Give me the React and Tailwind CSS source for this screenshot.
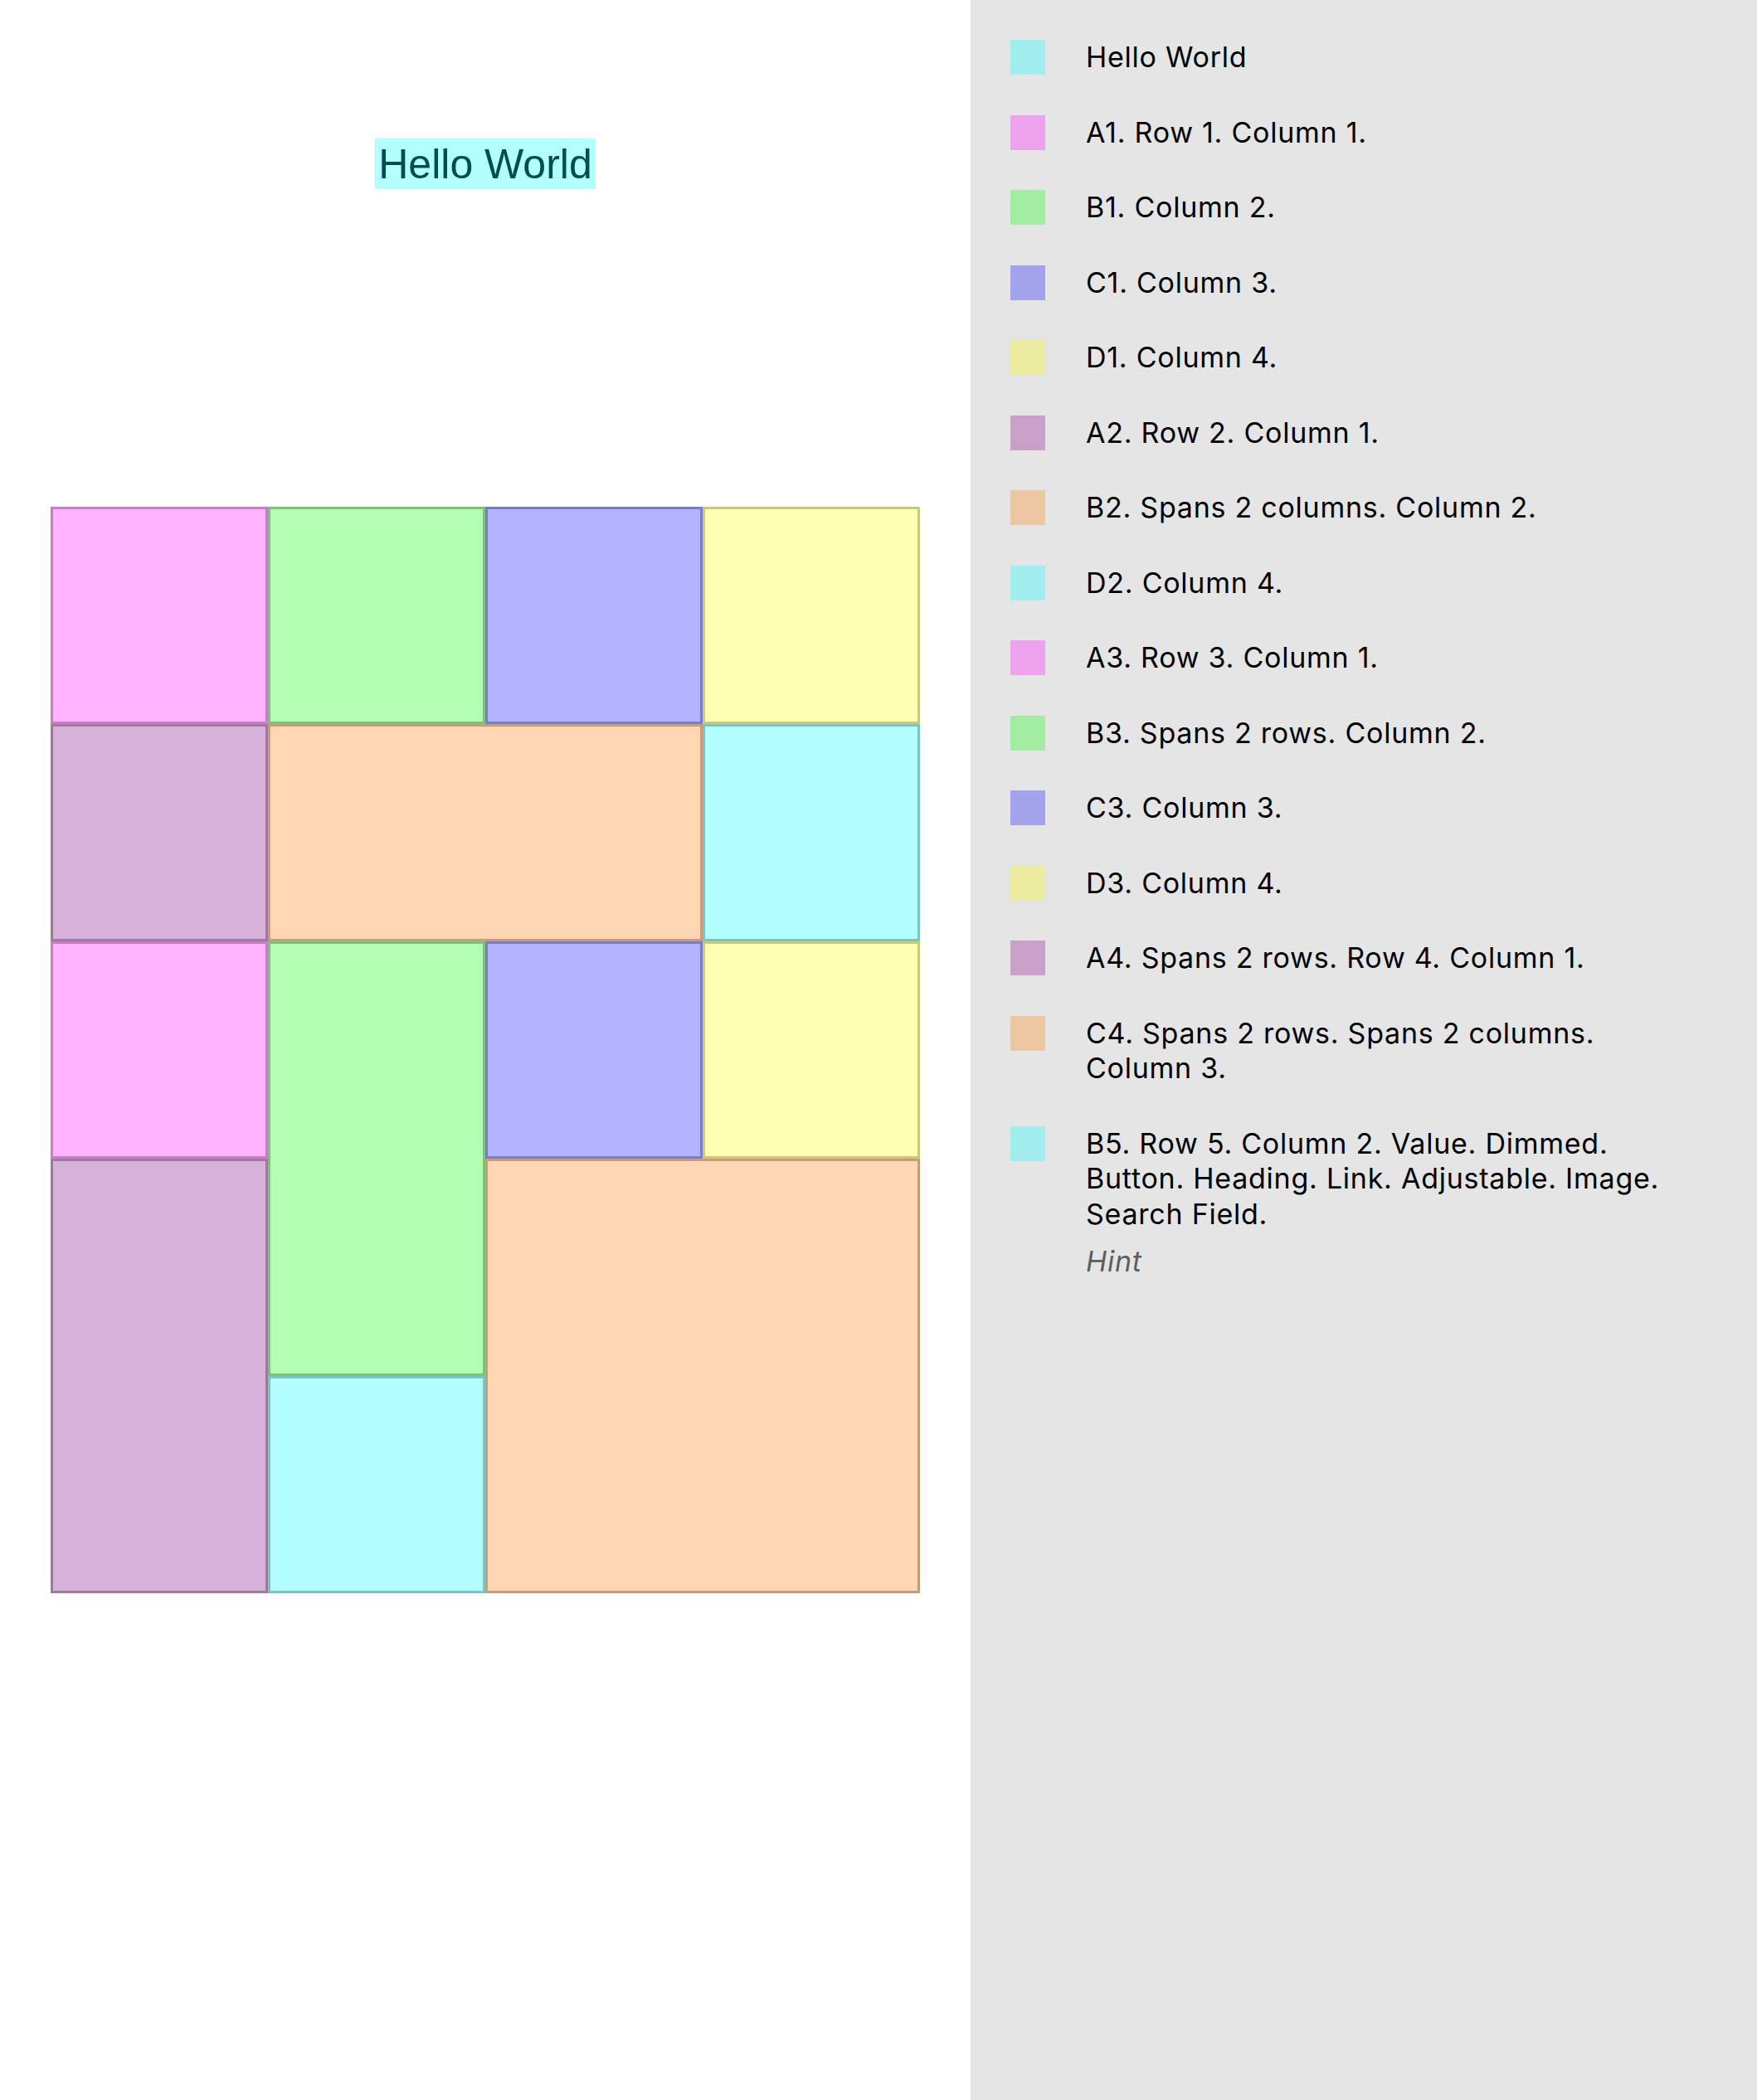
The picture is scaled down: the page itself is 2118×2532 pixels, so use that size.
const cells = [
  { id: "A1", cls: "col-start-1 row-start-1 bg-[#ffb3ff] border-[#c97ec9]" },
  { id: "B1", cls: "col-start-2 row-start-1 bg-[#b3ffb3] border-[#79c479]" },
  { id: "C1", cls: "col-start-3 row-start-1 bg-[#b3b3ff] border-[#7b7bcc]" },
  { id: "D1", cls: "col-start-4 row-start-1 bg-[#ffffb3] border-[#c9c97b]" },
  { id: "A2", cls: "col-start-1 row-start-2 bg-[#d8b1d8] border-[#9c7a9c]" },
  { id: "B2", cls: "col-start-2 col-span-2 row-start-2 bg-[#ffd6b3] border-[#c89c78]" },
  { id: "D2", cls: "col-start-4 row-start-2 bg-[#b3ffff] border-[#79c4c4]" },
  { id: "A3", cls: "col-start-1 row-start-3 bg-[#ffb3ff] border-[#c97ec9]" },
  { id: "B3", cls: "col-start-2 row-start-3 row-span-2 bg-[#b3ffb3] border-[#79c479]" },
  { id: "C3", cls: "col-start-3 row-start-3 bg-[#b3b3ff] border-[#7b7bcc]" },
  { id: "D3", cls: "col-start-4 row-start-3 bg-[#ffffb3] border-[#c9c97b]" },
  { id: "A4", cls: "col-start-1 row-start-4 row-span-2 bg-[#d8b1d8] border-[#9c7a9c]" },
  { id: "C4", cls: "col-start-3 col-span-2 row-start-4 row-span-2 bg-[#ffd6b3] border-[#c89c78]" },
  { id: "B5", cls: "col-start-2 row-start-5 bg-[#b3ffff] border-[#79c4c4]" },
];

const legend = [
  { sw: "bg-[#a2eeee]", lines: ["Hello World"] },
  { sw: "bg-[#eda2ed]", lines: ["A1. Row 1. Column 1."] },
  { sw: "bg-[#a2eda2]", lines: ["B1. Column 2."] },
  { sw: "bg-[#a2a2ed]", lines: ["C1. Column 3."] },
  { sw: "bg-[#ededa2]", lines: ["D1. Column 4."] },
  { sw: "bg-[#c8a0c8]", lines: ["A2. Row 2. Column 1."] },
  { sw: "bg-[#edc6a2]", lines: ["B2. Spans 2 columns. Column 2."] },
  { sw: "bg-[#a2eeee]", lines: ["D2. Column 4."] },
  { sw: "bg-[#eda2ed]", lines: ["A3. Row 3. Column 1."] },
  { sw: "bg-[#a2eda2]", lines: ["B3. Spans 2 rows. Column 2."] },
  { sw: "bg-[#a2a2ed]", lines: ["C3. Column 3."] },
  { sw: "bg-[#ededa2]", lines: ["D3. Column 4."] },
  { sw: "bg-[#c8a0c8]", lines: ["A4. Spans 2 rows. Row 4. Column 1."] },
  { sw: "bg-[#edc6a2]", lines: ["C4. Spans 2 rows. Spans 2 columns.", "Column 3."] },
  {
    sw: "bg-[#a2eeee]",
    lines: [
      "B5. Row 5. Column 2. Value. Dimmed.",
      "Button. Heading. Link. Adjustable. Image.",
      "Search Field.",
    ],
    hint: "Hint",
  },
];

export default function App() {
  return (
    <div className="flex h-[2532px] w-[2118px]">
      {/* Canvas */}
      <div className="flex w-[1170px] flex-col items-center bg-white">
        <div className="mt-[167px] flex h-[61px] items-center bg-[#b3ffff] px-[4px] font-['Liberation_Sans',Arial,sans-serif] text-[50px] leading-none text-[#004d4d]">
          Hello World
        </div>
        <div className="mt-[383px] grid grid-cols-[repeat(4,262px)] grid-rows-[repeat(5,262px)]">
          {cells.map((c) => (
            <div key={c.id} className={`border-[3px] ${c.cls}`} />
          ))}
        </div>
      </div>

      {/* Legend */}
      <div className="flex flex-1 flex-col gap-[48px] bg-[#e5e5e5] pl-[48px] pt-[48px] font-['Inter','Noto_Sans',sans-serif] text-[34px] tracking-[0.75px] text-black">
        {legend.map((l, i) => (
          <div key={i} className="flex items-start">
            <span className={`h-[42px] w-[42px] shrink-0 ${l.sw}`} />
            <div className="ml-[49px]">
              {l.lines.map((t) => (
                <div key={t} className="h-[42.5px] leading-[42.5px] whitespace-nowrap">
                  {t}
                </div>
              ))}
              {l.hint && (
                <div className="mt-[15px] h-[42.5px] leading-[42.5px] italic text-[#5e5e5e]">{l.hint}</div>
              )}
            </div>
          </div>
        ))}
      </div>
    </div>
  );
}
